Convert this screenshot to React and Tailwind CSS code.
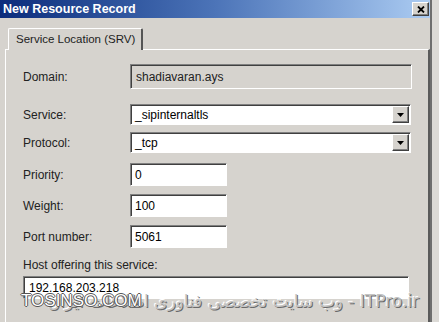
export default function App() {
  const font = { fontFamily: '"Liberation Sans", Arial, sans-serif' }

  const sunken = 'border border-t-[#808080] border-l-[#808080] border-r-white border-b-white shadow-[inset_1px_1px_0_#404040]'
  const raised = 'border border-t-white border-l-white border-r-[#404040] border-b-[#404040] shadow-[inset_-1px_-1px_0_#808080]'

  const Combo = ({ value }) => (
    <div className={`flex h-[21px] w-[281px] items-center bg-white ${sunken}`}>
      <span className="flex-1 pl-[4px] text-[12px] text-black">{value}</span>
      <div className={`mr-[1px] flex h-[17px] w-[17px] items-center justify-center bg-[#d6d3ce] ${raised}`}>
        <svg width="7" height="4" viewBox="0 0 7 4"><path d="M0 0h7L3.5 4z" fill="#000" /></svg>
      </div>
    </div>
  )

  const Field = ({ value }) => (
    <div className={`flex h-[23px] w-[97px] items-center bg-white pl-[4px] text-[12px] text-black ${sunken}`}>{value}</div>
  )

  const Label = ({ children }) => (
    <div className="w-[107px] shrink-0 text-[12px] text-[#222]">{children}</div>
  )

  return (
    <div className="relative flex h-[322px] w-[439px] overflow-hidden bg-[#dcdad6]" style={font}>
      <div className="flex w-[432px] shrink-0 flex-col border-r-2 border-[#6e6e6e] bg-[#d6d3ce]">
        {/* title bar */}
        <div className="flex h-[18px] items-center justify-between bg-gradient-to-r from-[#0c2c7c] via-[#4c74b8] to-[#acccf2] pl-[3px] pr-[1px]">
          <span className="text-[12.5px] font-bold text-white">New Resource Record</span>
          <div className={`flex h-[14px] w-[17px] items-center justify-center bg-[#d6d3ce] ${raised}`}>
            <svg width="8" height="7" viewBox="0 0 8 7"><path d="M1 0.5l6 6M7 0.5l-6 6" stroke="#000" strokeWidth="1.8" /></svg>
          </div>
        </div>

        {/* tab strip */}
        <div className="mt-[10px] flex pl-[8px]">
          <div className="relative z-10 -mb-[1px] flex h-[22px] w-[135px] items-center whitespace-nowrap rounded-t-[2px] border-l border-t border-r-2 border-l-white border-t-white border-r-[#555] bg-[#d6d3ce] pl-[7px] text-[11.5px] text-[#222]">
            Service Location (SRV)
          </div>
        </div>

        {/* panel */}
        <div className="ml-[5px] flex flex-1 flex-col border-l border-t border-r-2 border-l-white border-t-white border-r-[#5a5a5a] pl-[17px] pt-[14px]">
          <div className="flex items-center">
            <Label>Domain:</Label>
            <div className={`flex h-[25px] w-[282px] items-center bg-[#d6d3ce] pl-[5px] text-[12px] text-[#222] ${sunken}`}>shadiavaran.ays</div>
          </div>
          <div className="mt-[15px] flex items-center">
            <Label>Service:</Label>
            <Combo value="_sipinternaltls" />
          </div>
          <div className="mt-[7px] flex items-center">
            <Label>Protocol:</Label>
            <Combo value="_tcp" />
          </div>
          <div className="mt-[10px] flex items-center">
            <Label>Priority:</Label>
            <Field value="0" />
          </div>
          <div className="mt-[8px] flex items-center">
            <Label>Weight:</Label>
            <Field value="100" />
          </div>
          <div className="mt-[8px] flex items-center">
            <Label>Port number:</Label>
            <Field value="5061" />
          </div>
          <div className="mt-[8px] text-[12px] text-[#222]">Host offering this service:</div>
          <div className={`mt-[2px] flex h-[23px] w-[386px] items-center bg-white pl-[5px] text-[12px] text-black ${sunken}`}>192.168.203.218</div>
        </div>
      </div>

      {/* watermark */}
      <div
        className="absolute right-[20px] top-[289px] whitespace-nowrap text-[17px] text-[#c4c4c4] [text-shadow:1px_1px_0_#6a6a6a,-1px_-1px_0_#ffffff]"
        dir="rtl"
        style={{ fontFamily: '"DejaVu Sans", sans-serif' }}
      >
        ITPro.ir - وب سایت تخصصی فناوری اطلاعات ایران
      </div>
      <div className="absolute left-[21px] top-[288px] text-[17px] text-white [text-shadow:1px_0_0_#555,-1px_0_0_#555,0_1px_0_#555,0_-1px_0_#555]">
        TOSINSO.COM
      </div>
    </div>
  )
}
